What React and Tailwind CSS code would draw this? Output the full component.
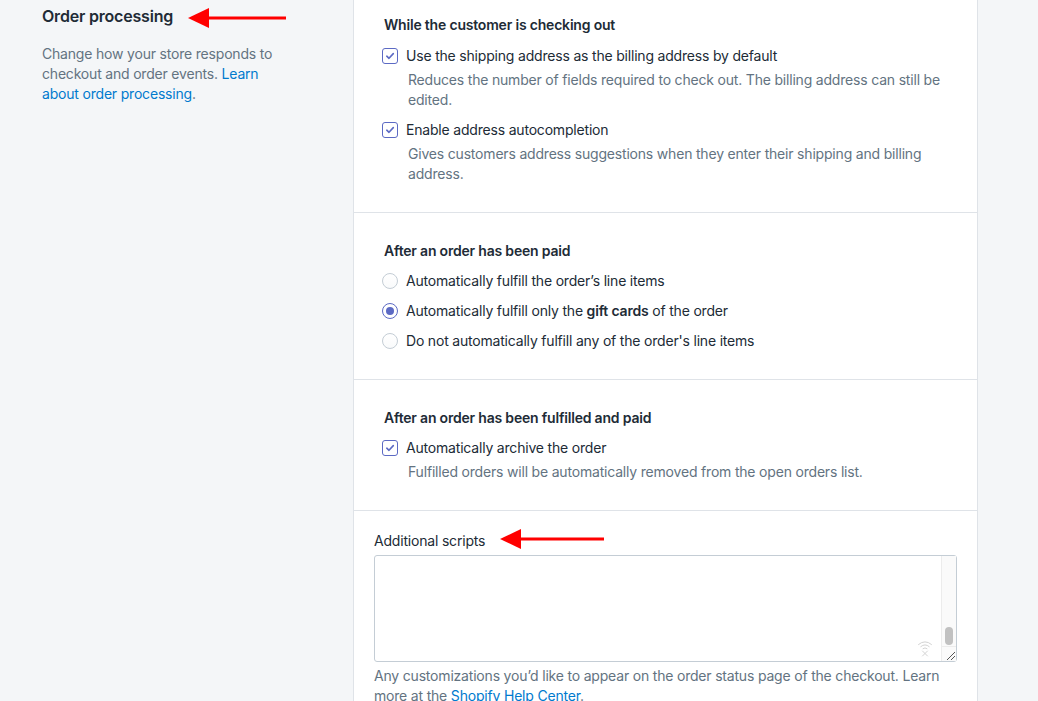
import React from "react";

const font = { fontFamily: "Inter, 'Noto Sans', sans-serif" };

// Polaris-like checkbox, always checked here
const Checkbox = () => (
  <span className="flex h-4 w-4 shrink-0 items-center justify-center rounded-[3px] border-[1.5px] border-[#5c6ac4] bg-white">
    <svg width="10" height="10" viewBox="0 0 10 10" fill="none">
      <path d="M1.8 5.2 L4 7.3 L8.3 2.6" stroke="#5c6ac4" strokeWidth="1.6" strokeLinecap="round" strokeLinejoin="round" />
    </svg>
  </span>
);

const Radio = ({ checked }) =>
  checked ? (
    <span className="flex h-4 w-4 shrink-0 items-center justify-center rounded-full border-[1.5px] border-[#5c6ac4] bg-white">
      <span className="h-2 w-2 rounded-full bg-[#5c6ac4]" />
    </span>
  ) : (
    <span className="h-4 w-4 shrink-0 rounded-full border border-[#c4cdd5] bg-gradient-to-b from-white to-[#f9fafb]" />
  );

const CheckRow = ({ label, help }) => (
  <div className="-ml-[2px]">
    <div className="flex h-5 items-center gap-2">
      <Checkbox />
      <span className="text-sm text-[#212b36]">{label}</span>
    </div>
    {help && <p className="mt-1 pl-[26px] text-sm leading-5 text-[#637381]">{help}</p>}
  </div>
);

const RadioRow = ({ checked, children }) => (
  <div className="-ml-[2px] flex h-5 items-center gap-2">
    <Radio checked={checked} />
    <span className="text-sm text-[#212b36]">{children}</span>
  </div>
);

const Arrow = ({ className, width }) => (
  <svg className={className} width={width} height="22" viewBox={`0 0 ${width} 22`}>
    <line x1="18" y1="11" x2={width} y2="11" stroke="#f00" strokeWidth="3" />
    <polygon points="0,11 21,1 21,21" fill="#f00" />
  </svg>
);

export default function App() {
  return (
    <div className="relative flex h-[701px] overflow-hidden bg-[#f4f6f8] leading-5 tracking-[-0.012em]" style={font}>
      {/* left annotation column */}
      <div className="w-[353px] shrink-0 pl-[42px] pt-[4px]">
        <h2 className="text-base font-semibold leading-6 text-[#212b36]">Order processing</h2>
        <p className="mt-4 w-[240px] text-sm leading-5 text-[#637381]">
          Change how your store responds to checkout and order events.{" "}
          <span className="text-[#007ace]">Learn about order processing</span>.
        </p>
      </div>

      {/* settings card */}
      <div className="w-[625px] shrink-0 border-x border-[#dfe3e8] bg-white">
        <section className="border-b border-[#dfe3e8] pb-[28px] pl-[30px] pr-[30px] pt-[15px]">
          <h3 className="text-sm font-semibold text-[#212b36]">While the customer is checking out</h3>
          <div className="mt-[11px] flex flex-col gap-[10px]">
            <CheckRow
              label="Use the shipping address as the billing address by default"
              help="Reduces the number of fields required to check out. The billing address can still be edited."
            />
            <CheckRow
              label="Enable address autocompletion"
              help="Gives customers address suggestions when they enter their shipping and billing address."
            />
          </div>
        </section>

        <section className="border-b border-[#dfe3e8] pb-[28px] pl-[30px] pr-[30px] pt-[28px]">
          <h3 className="text-sm font-semibold text-[#212b36]">After an order has been paid</h3>
          <div className="mt-[10px] flex flex-col gap-[10px]">
            <RadioRow>Automatically fulfill the order’s line items</RadioRow>
            <RadioRow checked>
              Automatically fulfill only the <b className="font-semibold">gift cards</b> of the order
            </RadioRow>
            <RadioRow>Do not automatically fulfill any of the order's line items</RadioRow>
          </div>
        </section>

        <section className="border-b border-[#dfe3e8] pb-[28px] pl-[30px] pr-[30px] pt-[28px]">
          <h3 className="text-sm font-semibold text-[#212b36]">After an order has been fulfilled and paid</h3>
          <div className="mt-[10px]">
            <CheckRow
              label="Automatically archive the order"
              help="Fulfilled orders will be automatically removed from the open orders list."
            />
          </div>
        </section>

        <section className="px-[20px] pt-[20px]">
          <label className="block text-sm text-[#212b36]">Additional scripts</label>
          <div className="mt-1 flex h-[107px] rounded-[3px] border border-[#c4cdd5] bg-white">
            <div className="flex flex-1 items-end justify-end pb-[4px] pr-[8px]">
              {/* faint extension icon */}
              <svg width="16" height="18" viewBox="0 0 16 18" fill="none" stroke="#d3d3d3" strokeWidth="1" strokeLinecap="round">
                <path d="M1.5 5.5 Q8 0 14.5 5.5" />
                <path d="M3.8 7.6 Q8 4 12.2 7.6" />
                <path d="M6 9.6 Q8 8 10 9.6" />
                <path d="M5.5 12 L10.5 17 M10.5 12 L5.5 17" />
              </svg>
            </div>
            <div className="flex w-[15px] flex-col border-l border-[#ececec] bg-[#fafafa]">
              <div className="flex flex-1 items-end justify-center pb-[1px]">
                <span className="h-[18px] w-[8px] rounded-full bg-[#c1c1c1]" />
              </div>
              <div className="h-[15px] border-t border-[#ececec]">
                <svg width="14" height="14" viewBox="0 0 14 14" stroke="#555" strokeWidth="1">
                  <path d="M5 13 L13 5 M9 13 L13 9" />
                </svg>
              </div>
            </div>
          </div>
          <p className="mt-1 text-sm leading-5 text-[#637381]">
            Any customizations you’d like to appear on the order status page of the checkout. Learn more at the{" "}
            <span className="text-[#007ace]">Shopify Help Center</span>.
          </p>
        </section>
      </div>

      {/* annotation arrows */}
      <Arrow className="absolute left-[188px] top-[7px]" width={98} />
      <Arrow className="absolute left-[500px] top-[528px]" width={104} />
    </div>
  );
}
